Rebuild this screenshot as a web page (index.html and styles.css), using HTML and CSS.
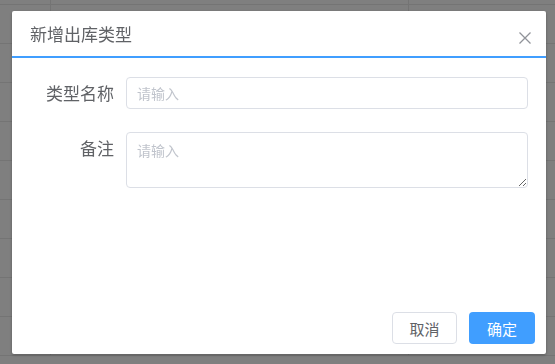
FILE: index.html
```html
<!DOCTYPE html>
<html lang="zh-CN">
<head>
    <meta charset="UTF-8">
    <meta name="viewport" content="width=device-width, initial-scale=1.0">
    <title>新增出库类型</title>
    <link rel="stylesheet" href="styles.css">
</head>
<body>
    <!-- page behind the mask -->
    <div class="page">
        <div class="page-row first"><div class="cell c1"></div><div class="cell c2"></div><div class="cell c3"></div></div>
        <div class="page-row"><div class="cell c1"></div><div class="cell c2"></div><div class="cell c3"></div></div>
        <div class="page-row"><div class="cell c1"></div><div class="cell c2"></div><div class="cell c3"></div></div>
        <div class="page-row"><div class="cell c1"></div><div class="cell c2"></div><div class="cell c3"></div></div>
        <div class="page-row"><div class="cell c1"></div><div class="cell c2"></div><div class="cell c3"></div></div>
        <div class="page-row"><div class="cell c1"></div><div class="cell c2"></div><div class="cell c3"></div></div>
        <div class="page-row"><div class="cell c1"></div><div class="cell c2"></div><div class="cell c3"></div></div>
        <div class="page-row"><div class="cell c1"></div><div class="cell c2"></div><div class="cell c3"></div></div>
        <div class="page-row"><div class="cell c1"></div><div class="cell c2"></div><div class="cell c3"></div></div>
        <div class="page-row"><div class="cell c1"></div><div class="cell c2"></div><div class="cell c3"></div></div>
    </div>

    <div class="mask">
        <div class="dialog">
            <div class="dialog-header">
                <span class="dialog-title">新增出库类型</span>
                <button class="dialog-close" aria-label="关闭">
                    <svg width="12" height="12" viewBox="0 0 12 12">
                        <path d="M0.5 0.5 L11.5 11.5 M11.5 0.5 L0.5 11.5" stroke="#909399" stroke-width="1.3" fill="none"/>
                    </svg>
                </button>
            </div>

            <div class="dialog-body">
                <div class="form-item">
                    <label class="form-label" for="type-name">类型名称</label>
                    <input type="text" id="type-name" class="form-input" placeholder="请输入">
                </div>
                <div class="form-item">
                    <label class="form-label" for="type-remark">备注</label>
                    <textarea id="type-remark" class="form-input form-textarea" placeholder="请输入"></textarea>
                </div>
            </div>

            <div class="dialog-footer">
                <button class="btn btn-default">取消</button>
                <button class="btn btn-primary">确定</button>
            </div>
        </div>
    </div>
</body>
</html>
```

FILE: styles.css
```css
* {
    margin: 0;
    padding: 0;
    box-sizing: border-box;
    font-family: "Noto Sans CJK SC", "Noto Sans", sans-serif;
}

body {
    background-color: #ffffff;
    width: 555px;
    height: 364px;
    overflow: hidden;
}

/* page behind */
.page {
    width: 555px;
}

.page-row {
    display: flex;
    height: 39px;
    border-bottom: 1px solid #e8e8e8;
}

.page-row.first {
    height: 5px;
}

.cell {
    height: 100%;
}

.c1 {
    width: 51px;
    border-right: 1px solid #e8e8e8;
}

.c2 {
    width: 358px;
    border-right: 1px solid #e8e8e8;
}

.c3 {
    flex: 1;
}

/* mask + dialog */
.mask {
    position: fixed;
    top: 0;
    left: 0;
    right: 0;
    bottom: 0;
    background-color: rgba(0, 0, 0, 0.5);
}

.dialog {
    display: flex;
    flex-direction: column;
    width: 534px;
    height: 343px;
    margin: 11px 0 0 12px;
    background-color: #ffffff;
    border-radius: 2px;
    box-shadow: 0 1px 3px rgba(0, 0, 0, 0.3);
}

.dialog-header {
    display: flex;
    align-items: center;
    justify-content: space-between;
    height: 47px;
    padding: 0 15px 0 18px;
    border-bottom: 2px solid #409eff;
}

.dialog-title {
    font-size: 17px;
    color: #606266;
    line-height: 24px;
}

.dialog-close {
    background: none;
    border: none;
    cursor: pointer;
    width: 12px;
    height: 12px;
    margin-top: 8px;
    display: flex;
}

.dialog-body {
    flex: 1;
    padding: 19px 18px 0 20px;
}

.form-item {
    display: flex;
    margin-bottom: 23px;
}

.form-label {
    width: 94px;
    padding-right: 12px;
    text-align: right;
    font-size: 17px;
    line-height: 32px;
    color: #606266;
}

.form-input {
    width: 402px;
    height: 32px;
    padding: 0 10px;
    border: 1px solid #dcdfe6;
    border-radius: 4px;
    font-size: 14px;
    color: #606266;
    outline: none;
}

.form-input::placeholder {
    color: #c0c4cc;
}

.form-textarea {
    height: 56px;
    padding: 7px 10px;
    line-height: 20px;
    resize: vertical;
}

.dialog-footer {
    display: flex;
    justify-content: flex-end;
    gap: 12px;
    padding: 0 11px 10px 0;
}

.btn {
    height: 32px;
    border-radius: 4px;
    font-size: 15px;
    cursor: pointer;
}

.btn-default {
    width: 65px;
    background-color: #ffffff;
    color: #606266;
    border: 1px solid #dcdfe6;
}

.btn-primary {
    width: 66px;
    background-color: #409eff;
    color: #ffffff;
    border: none;
}
```
